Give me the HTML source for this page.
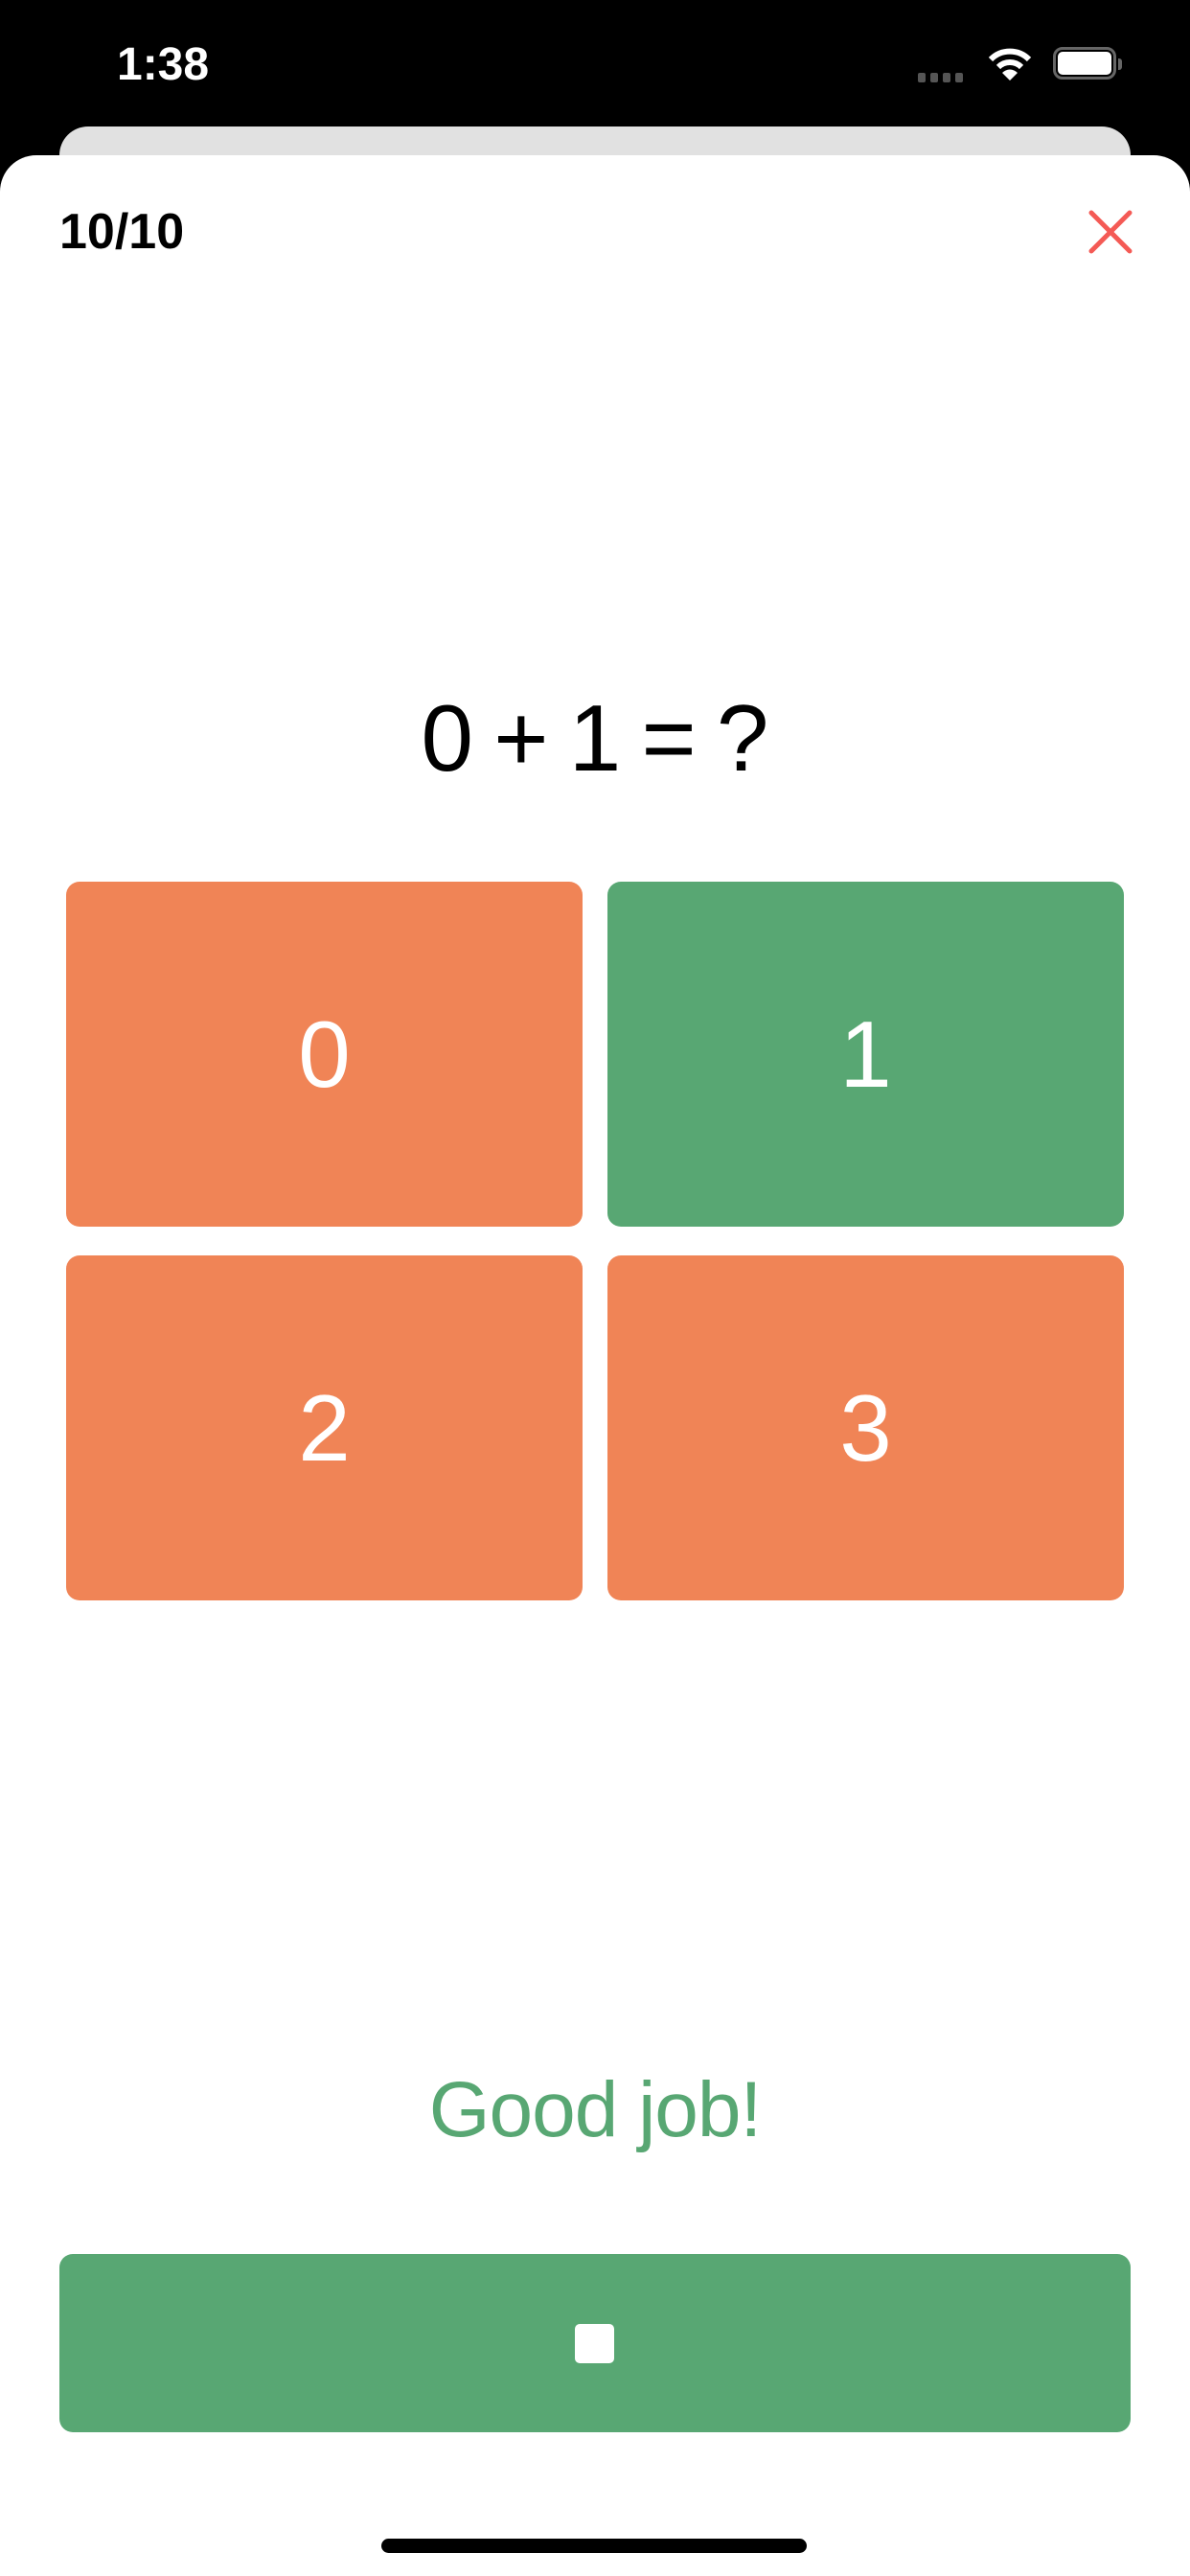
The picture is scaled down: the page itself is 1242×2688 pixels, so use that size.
<!DOCTYPE html>
<html><head><meta charset="utf-8"><style>
html,body{margin:0;padding:0}
body{width:1242px;height:2688px;background:#000;position:relative;overflow:hidden;font-family:"Liberation Sans",sans-serif}
.abs{position:absolute}
.sheet{left:0;top:162px;width:1242px;height:2526px;background:#fff;border-radius:38px 38px 0 0}
.card{left:62px;top:132px;width:1118px;height:80px;background:#e1e1e1;border-radius:30px 30px 0 0}
.btn{position:absolute;border-radius:14px;color:#fff;font-size:98px;display:flex;align-items:center;justify-content:center}
.o{background:#f08456}.g{background:#58a773}
</style></head><body>
<div class="abs" style="left:122px;top:40px;color:#fff;font-size:48px;font-weight:bold">1:38</div>
<div class="abs" style="left:958px;top:76px;display:flex;gap:5px">
<div style="width:8px;height:10px;background:#555;border-radius:2px"></div><div style="width:8px;height:10px;background:#555;border-radius:2px"></div><div style="width:8px;height:10px;background:#555;border-radius:2px"></div><div style="width:8px;height:10px;background:#555;border-radius:2px"></div></div>
<svg class="abs" style="left:1030px;top:48px" width="48" height="38" viewBox="0 0 48 38"><path d="M4 14 A28 28 0 0 1 44 14" stroke="#fff" stroke-width="6" fill="none"/><path d="M12 22 A17 17 0 0 1 36 22" stroke="#fff" stroke-width="6" fill="none"/><path d="M24 36 L16 28 A11 11 0 0 1 32 28 Z" fill="#fff"/></svg>
<div class="abs" style="left:1099px;top:49px;width:66px;height:34px;border:3px solid #666;border-radius:10px;box-sizing:border-box"></div>
<div class="abs" style="left:1104px;top:54px;width:56px;height:24px;background:#fff;border-radius:5px"></div>
<div class="abs" style="left:1167px;top:61px;width:4px;height:12px;background:#666;border-radius:0 3px 3px 0"></div>
<div class="abs card"></div>
<div class="abs sheet"></div>
<div class="abs" style="left:62px;top:212px;font-size:52px;font-weight:bold;color:#000">10/10</div>
<svg class="abs" style="left:1136px;top:219px" width="46" height="46" viewBox="0 0 46 46"><path d="M3 3 L43 43 M43 3 L3 43" stroke="#f45a55" stroke-width="5" stroke-linecap="round"/></svg>
<div class="abs" style="left:0;top:713px;width:1242px;text-align:center;font-size:98px;line-height:115px;color:#000;word-spacing:-6px">0 + 1 = ?</div>
<div class="btn o" style="left:69px;top:920px;width:539px;height:360px">0</div>
<div class="btn g" style="left:634px;top:920px;width:539px;height:360px">1</div>
<div class="btn o" style="left:69px;top:1310px;width:539px;height:360px">2</div>
<div class="btn o" style="left:634px;top:1310px;width:539px;height:360px">3</div>
<div class="abs" style="left:0;top:2152px;width:1242px;text-align:center;font-size:82px;line-height:100px;color:#58a773;letter-spacing:-1px">Good job!</div>
<div class="abs g" style="left:62px;top:2352px;width:1118px;height:186px;border-radius:14px"></div>
<div class="abs" style="left:600px;top:2425px;width:41px;height:41px;background:#fff;border-radius:5px"></div>
<div class="abs" style="left:398px;top:2649px;width:444px;height:15px;background:#000;border-radius:8px"></div>
</body></html>
